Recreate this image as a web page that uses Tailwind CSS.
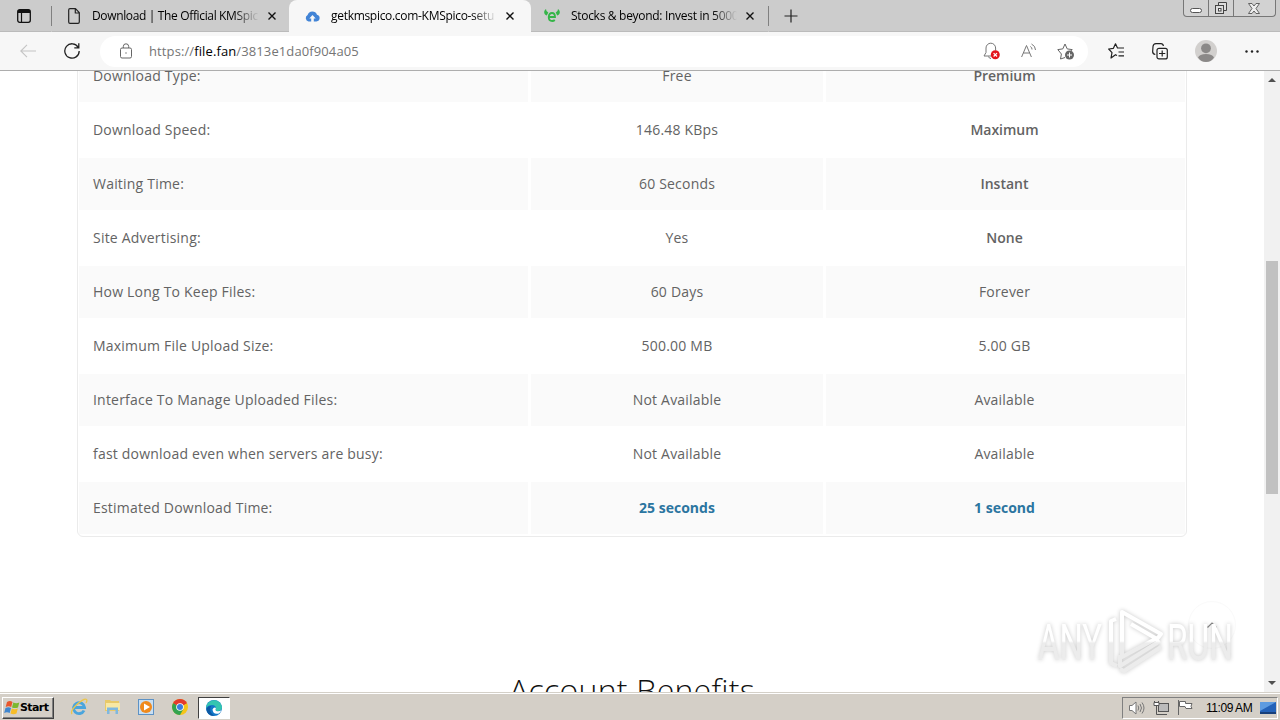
<!DOCTYPE html>
<html lang="en">

<head>
    <meta charset="UTF-8">
    <meta name="viewport" content="width=device-width, initial-scale=1.0">
    <title>getkmspico.com-KMSpico-setup</title>
    <script src="https://cdn.jsdelivr.net/npm/@tailwindcss/browser@4"></script>
</head>

<body class="w-[1280px] h-[720px] overflow-hidden flex flex-col bg-white font-['Open_Sans',sans-serif] whitespace-nowrap">
    <!-- tab strip -->
    <div class="relative h-8 shrink-0 flex bg-[#cccccc] text-[12px] text-black">
        <div class="w-[51px] flex items-center pl-[17px] border-b border-[#bbb]">
            <svg class="w-[14px] h-[14px]" viewBox="0 0 14 14" fill="none" stroke="#111"><rect x=".7" y=".7" width="12.6" height="12.6" rx="2" stroke-width="1.3" /><path d="M1 2.5h12" stroke-width="3" /><path d="M4.5 3v10" stroke-width="1.2" /></svg>
        </div>
        <div class="w-px h-5 mt-1.5 bg-[#808080]"></div>
        <div class="w-[237px] flex items-center pl-4 border-b border-[#bbb]">
            <svg class="w-3 h-4 shrink-0" viewBox="0 0 12 16" fill="none" stroke="#222" stroke-width="1.2" stroke-linejoin="round"><path d="M2 .7h5.5l3.800 4V14q0 1.300-1.300 1.300H2Q.7 15.300.7 14V2Q.7.7 2 .7zM7.300.9V5h3.900" /></svg>
            <span class="ml-3 w-[167px] tracking-[-0.35px] mask-r-from-85%">Download | The Official KMSpic</span>
            <svg class="ml-[9px] w-2 h-2" viewBox="0 0 8 8" stroke="#111" stroke-width="1.4"><path d="M.5.5l7 7M7.500.5l-7 7" /></svg>
        </div>
        <div class="w-[242px] flex items-center pl-4 bg-[#f7f7f7] rounded-t-lg">
            <svg class="w-[15px] h-[11px] shrink-0" viewBox="0 0 15 11"><path d="M3.500 10.500A3.500 3.500 0 0 1 2.600 4 5 5 0 0 1 12 3.800a3.400 3.400 0 0 1-.5 6.700z" fill="#4284d6" /><path d="M7.500 4l3.200 3.500H8.800V11H6.200V7.500H4.300z" fill="#f7f7f7" /></svg>
            <span class="ml-[11px] w-[166px] tracking-[-0.3px] mask-r-from-85%">getkmspico.com-KMSpico-setu</span>
            <svg class="ml-[9px] w-2 h-2" viewBox="0 0 8 8" stroke="#111" stroke-width="1.4"><path d="M.5.5l7 7M7.500.5l-7 7" /></svg>
        </div>
        <div class="w-[237px] flex items-center pl-[13px] border-b border-[#bbb]">
            <svg class="w-4 h-[13px] shrink-0" viewBox="0 0 16 13"><path d="M2 0C-.8 2-.3 5.800 2.800 6.500L4.300 3.500Q2 2.800 2 0zM14 0c2.800 2 2.300 5.800-.8 6.500L11.700 3.500Q14 2.800 14 0z" fill="#35b548" /><path d="M4.700 8H11Q11 4 8 4T4.700 8q0 4 3.500 4 1.500 0 2.600-1" fill="none" stroke="#35b548" stroke-width="1.800" /></svg>
            <span class="ml-[11px] w-[166px] tracking-[-0.3px] mask-r-from-85%">Stocks &amp; beyond: Invest in 5000</span>
            <svg class="ml-[9px] w-2 h-2" viewBox="0 0 8 8" stroke="#111" stroke-width="1.4"><path d="M.5.5l7 7M7.500.5l-7 7" /></svg>
        </div>
        <div class="w-px h-5 mt-1.5 bg-[#808080]"></div>
        <div class="flex-1 flex items-center pl-[15px] border-b border-[#bbb]">
            <svg class="w-[14px] h-[14px]" viewBox="0 0 14 14" stroke="#222" stroke-width="1.2"><path d="M7 .5v13M.5 7h13" /></svg>
        </div>
        <!-- window buttons -->
        <div class="absolute right-1 top-0 flex h-[17px] w-[93px] rounded-b border border-t-0 border-[#777] bg-[#d2d2d2]">
            <div class="w-[25px] border-r border-[#777] pl-1.5 pt-2"><div class="w-3 h-[5px] rounded-sm border border-[#555] bg-white"></div></div>
            <div class="w-[25px] border-r border-[#777] pl-1.5 pt-0.5">
                <svg class="w-3 h-3" viewBox="0 0 12 12" fill="#ddd" stroke="#444"><path d="M3.500 3.500v-3h8v8h-3" /><rect x=".5" y="3.500" width="8" height="8" /><rect x="3.500" y="6.500" width="2.500" height="2.500" fill="#fff" /></svg>
            </div>
            <div class="flex-1 pl-[14px] pt-[3px]">
                <svg class="w-3 h-[11px]" viewBox="0 0 12 11"><path d="M.5.5h3.500L6 3 8 .5h3.500L8 5.500l3.500 5H8L6 8l-2 2.500H.5L4 5.500z" fill="#eee" stroke="#555" stroke-width=".9" /></svg>
            </div>
        </div>
    </div>

    <!-- toolbar -->
    <div class="h-[39px] shrink-0 flex items-center bg-[#f7f7f7] border-b border-[#adadad]">
        <svg class="ml-5 w-4 h-[14px]" viewBox="0 0 16 14" fill="none" stroke="#c4c4c4" stroke-width="1.100"><path d="M16 7H.8M7 .8L.8 7 7 13.200" /></svg>
        <svg class="ml-7 w-4 h-4" viewBox="0 0 16 16" fill="none" stroke="#222" stroke-width="1.300"><path d="M14.200 4.300A7.200 7.200 0 1 0 15.200 8M14.800.3v4.500h-4.500" /></svg>
        <div class="ml-5 w-[988px] h-[31px] rounded-full bg-white flex items-center">
            <svg class="ml-5 w-3 h-4" viewBox="0 0 12 16" fill="none" stroke="#666"><rect x=".5" y="5" width="11" height="10" rx="1.500" /><path d="M3.300 5V3.500a2.700 2.700 0 0 1 5.400 0V5" /><circle cx="6" cy="10" r=".7" fill="#666" stroke="none" /></svg>
            <span class="ml-[17px] pt-px text-[13px] tracking-[0.11px] text-[#757575]">https://<span class="text-black">file.fan</span>/3813e1da0f904a05</span>
            <svg class="ml-auto w-[17px] h-[18px]" viewBox="0 0 17 18"><path d="M8 14H1l2-3.500V6a4.800 4.800 0 0 1 9.600 0v2.500M5.500 14.500Q6 16.500 8 16.500" fill="none" stroke="#777" /><circle cx="12.300" cy="12.800" r="4.500" fill="#e3141c" /><path d="M10.600 11.100l3.400 3.400m0-3.400l-3.400 3.400" stroke="#fff" stroke-width="1.200" /></svg>
            <svg class="ml-[21px] w-4 h-4" viewBox="0 0 16 16" fill="none" stroke="#777"><path d="M.6 14L5.500 2.500 10.400 14M2.300 10h6.400M9.300 3.500q2 1 1.700 3M10.500 1q4 2 4 6" /></svg>
            <svg class="ml-5 mr-3.5 w-[17px] h-[17px]" viewBox="0 0 17 17"><path d="M8 14.500l-4.500 1.500.9-5L.8 6.600l5-.7L8 1l2.200 4.900 5 .7-2 2" fill="none" stroke="#666" stroke-linejoin="round" /><circle cx="12.500" cy="12" r="4.500" fill="#666" /><path d="M12.500 9.500v5M10 12h5" stroke="#fff" /></svg>
        </div>
        <svg class="ml-5 w-[17px] h-4" viewBox="0 0 17 16" fill="none" stroke="#222" stroke-width="1.200" stroke-linejoin="round"><path d="M9 12.500l-1.500-.8L3 15l1-5.300L.7 6l4.700-.7L7.500.8l2 4.200H16M10.500 9H16M10.500 12.800H16" /></svg>
        <svg class="ml-[27px] w-4 h-[17px]" viewBox="0 0 16 17" fill="none" stroke="#222" stroke-width="1.200"><path d="M3.300 11.500Q.3 11 .7 8L1 3.500Q1.300.8 4 .7h5q2 0 2.400 2.300" /><rect x="5" y="5.300" width="10.300" height="10.600" rx="2" /><path d="M10.200 7.500v6M7 10.500h6.300" /></svg>
        <svg class="ml-[27px] w-[22px] h-[22px]" viewBox="0 0 22 22"><circle cx="11" cy="11" r="11" fill="#d2d0ce" /><circle cx="11" cy="8.300" r="4.900" fill="#8b8988" /><path d="M3 17.500q1.500-3.500 8-3.500t8 3.500q-3 4.500-8 4.500t-8-4.500z" fill="#8b8988" /></svg>
        <svg class="ml-7 w-[14px] h-[3px]" viewBox="0 0 14 3" fill="#222"><circle cx="1.500" cy="1.500" r="1.200" /><circle cx="7" cy="1.500" r="1.200" /><circle cx="12.500" cy="1.500" r="1.200" /></svg>
    </div>

    <!-- page -->
    <div class="relative h-[621px] shrink-0 flex overflow-hidden">
        <div class="w-[1264px] h-full overflow-hidden">
            <div class="-mt-6 ml-[77px] w-[1110px] rounded-md border border-[#ebebeb] px-px py-0.5 text-[14px] text-[#636363]">
                <div id="rows" class="flex flex-col gap-0.5"></div>
            </div>
            <h2 class="mt-[131px] text-center text-[32px] leading-[44px] tracking-[0.25px] font-light text-[#111]">Account Benefits</h2>
        </div>
        <div class="w-4 bg-[#f1f1f1] flex flex-col items-center">
            <svg class="mt-[7px] w-2 h-1 shrink-0" viewBox="0 0 8 4" fill="#505050"><path d="M0 4l4-4 4 4z" /></svg>
            <div class="mt-[179px] w-3 h-[233px] shrink-0 bg-[#c1c1c1]"></div>
            <svg class="mt-auto mb-[7px] w-2 h-1 shrink-0" viewBox="0 0 8 4" fill="#505050"><path d="M0 0l4 4 4-4z" /></svg>
        </div>
        <!-- back to top -->
        <div class="absolute left-[1188px] top-[530px] w-12 h-12 rounded-full border border-[#fafafa] flex items-center justify-center">
            <svg class="w-2.5 h-1.5" viewBox="0 0 10 6" fill="none" stroke="#888" stroke-width="1.200"><path d="M.5 5.500L5 1l4.500 4.500" /></svg>
        </div>
        <!-- watermark -->
        <div class="absolute left-[1036px] top-[536px] w-[200px] h-[68px]">
            <svg class="w-[200px] h-[68px] drop-shadow-[0_0_2px_#00000038]" viewBox="0 0 200 68" font-family="Roboto" font-weight="400" font-size="50">
                <defs>
                    <linearGradient id="fade" x1="0" y1="0" x2="0" y2="68" gradientUnits="userSpaceOnUse"><stop offset=".5" stop-color="#fff" /><stop offset=".53" stop-color="#ececec" /></linearGradient>
                </defs>
                <g fill="url(#fade)">
                    <text x="2" y="53" textLength="64" lengthAdjust="spacingAndGlyphs">ANY</text>
                    <text x="131" y="53" textLength="66" lengthAdjust="spacingAndGlyphs">RUN</text>
                </g>
                <path d="M80 12l-5 2v42l6 3M86 39V5l39 22-4 5-26-15M86 20v30l37-20M84 48v11l40-25M84 62l4 2 37-24" fill="none" stroke="url(#fade)" stroke-width="4" stroke-linejoin="round" />
            </svg>
        </div>
    </div>

    <!-- taskbar -->
    <div class="h-[28px] shrink-0 flex items-center bg-[#d4cfc7] border-t border-[#d4d0c8] font-['Liberation_Sans',sans-serif] text-[11px] text-black shadow-[inset_0_1px_0_#fff]">
        <div class="ml-0.5 mt-0.5 w-[52px] h-[22px] flex items-center border border-t-white border-l-white border-r-[#404040] border-b-[#404040] shadow-[inset_-1px_-1px_0_#808080]">
            <svg class="ml-px w-4 h-4 shrink-0" viewBox="0 0 16 16"><path d="M3 2q3-2 5.500 0L7.200 7Q4.500 5.500 1.700 7z" fill="#e8562c" /><path d="M9.300 2.500q3 1.500 6 0L14 7.500q-3 1.200-6 0z" fill="#7cb82f" /><path d="M1.500 8q3-1.500 5.500 0L5.700 13Q3 11.500.2 13z" fill="#3f86cf" /><path d="M7.800 8.500q3 1.500 6 0L12.500 13.500q-3 1.500-6 0z" fill="#f7bd28" /></svg>
            <span class="pt-px font-['DejaVu_Sans',sans-serif] font-bold text-[11px] tracking-[-0.6px]">Start</span>
        </div>
        <svg class="ml-4 w-[18px] h-[18px]" viewBox="0 0 18 18" fill="none"><path d="M14 12.500A5.500 5.500 0 1 1 14.500 9.500H5" stroke="#4aa5dd" stroke-width="2.900" /><path d="M2 16C-1 12 14-1 16.500 1.500q1 1-.5 3.500" stroke="#ecc64b" stroke-width="1.300" /></svg>
        <svg class="ml-4 w-[17px] h-[17px]" viewBox="0 0 17 17"><path d="M1 2h5l1 1h8v10H1z" fill="#e8c969" /><path d="M2 5h14v7H2z" fill="#f8e8a4" /><path d="M3 16V9.500h11V16h-2.500v-4h-6v4z" fill="#7fb8df" /></svg>
        <svg class="ml-[17px] w-4 h-4" viewBox="0 0 16 16"><rect x=".5" y=".5" width="15" height="15" fill="#c9dff2" stroke="#5d92c5" /><circle cx="8" cy="8" r="6" fill="#f08a1c" /><path d="M6 4.500l6 3.500-6 3.500z" fill="#fff" /></svg>
        <svg class="ml-[18px] w-4 h-4" viewBox="0 0 16 16"><circle cx="8" cy="8" r="8" fill="#f5c518" /><path d="M8 8L1.100 4A8 8 0 0 1 14.900 4z" fill="#e33b2e" /><path d="M1.100 4A8 8 0 0 0 8 16l3.400-6L8 8z" fill="#32a350" /><path d="M8 4h6.900L8 8 1.100 4z" fill="#e33b2e" /><circle cx="8" cy="8" r="3.800" fill="#fff" /><circle cx="8" cy="8" r="3" fill="#3b7de0" /></svg>
        <div class="ml-2.5 mt-0.5 w-8 h-[22px] flex items-center justify-center bg-white border border-t-[#404040] border-l-[#404040] border-r-white border-b-white">
            <svg class="w-4 h-4" viewBox="0 0 16 16"><circle cx="8" cy="8" r="8" fill="#1278c8" /><path d="M.3 6.500C2-1.500 14-2.500 16 7q0 4-4.500 4-3 0-1.500-2.500Q10 5 6 5 2 5 .3 8z" fill="#34c5b0" /><path d="M10 8q-1.500 3 1.500 3.200 2 .2 4-1-1 2-2.500 3.200Q7 15 6.500 9.500 8 6.500 10 8z" fill="#fff" /><path d="M5 6q-3 5 3 9.900Q1 16 .3 9 2 5.500 5 6z" fill="#0c59a4" /></svg>
        </div>
        <div class="ml-auto mr-0.5 mt-0.5 w-[156px] h-[22px] flex items-center border border-t-[#808080] border-l-[#808080] border-r-white border-b-white">
            <svg class="ml-1.5 w-4 h-[14px]" viewBox="0 0 16 14" fill="none" stroke="#777"><path d="M.5 4.500H3L7 1v12L3 9.500H.5z" fill="#fff" /><path d="M9 4.500q1.500 2.500 0 5M11 3q3 4 0 8M13 1.500q4 5.500 0 11" /></svg>
            <svg class="ml-2 w-4 h-4" viewBox="0 0 16 16" fill="#fff" stroke="#555"><rect x="5.500" y="3.500" width="10" height="8" fill="#bbb" /><path d="M1.500 1v3.500h4V1M3.500 5v9.500h4M7 14.500h7" fill="none" /><path d="M1 2.500h5v3H1z" /></svg>
            <svg class="ml-2 w-4 h-[15px]" viewBox="0 0 16 15" fill="#fff" stroke="#666"><path d="M2.500 1.500h6v2h6.500q-2 3 0 5H9l-1-2H2.500z" /><path d="M1.500 0v15" /></svg>
            <span class="ml-[13px] text-[12px] tracking-[-0.45px]">11:09 AM</span>
            <svg class="ml-auto mr-px w-4 h-3" viewBox="0 0 16 12"><rect width="16" height="12" fill="#2462b8" /><path d="M0 0h16L0 9z" fill="#5d9be0" /><path d="M0 10h16v2H0z" fill="#173f7a" /></svg>
        </div>
    </div>

    <script>
        const bold = "font-semibold";
        const blue = "font-bold text-[#2b75a0]";
        const normal = "tracking-[0.2px]";
        const data = [
            ["Download Type:", "Free", "Premium", normal, bold],
            ["Download Speed:", "146.48 KBps", "Maximum", normal, bold],
            ["Waiting Time:", "60 Seconds", "Instant", normal, bold],
            ["Site Advertising:", "Yes", "None", normal, bold],
            ["How Long To Keep Files:", "60 Days", "Forever", normal, normal],
            ["Maximum File Upload Size:", "500.00 MB", "5.00 GB", normal, normal],
            ["Interface To Manage Uploaded Files:", "Not Available", "Available", normal, normal],
            ["fast download even when servers are busy:", "Not Available", "Available", normal, normal],
            ["Estimated Download Time:", "25 seconds", "1 second", blue, blue],
        ];

        document.querySelector("#rows").innerHTML = data.map((r, i) => {
            const bg = i % 2 ? "bg-white" : "bg-[#fafafa]";
            return `<div class="flex gap-[3px] h-[52px] leading-[52px]">
                <div class="w-[449px] pl-[14px] tracking-[0.21px] ${bg}">${r[0]}</div>
                <div class="w-[292px] text-center ${bg} ${r[3]}">${r[1]}</div>
                <div class="flex-1 pr-0.5 text-center ${bg} ${r[4]}">${r[2]}</div>
            </div>`;
        }).join("");
    </script>
</body>

</html>
